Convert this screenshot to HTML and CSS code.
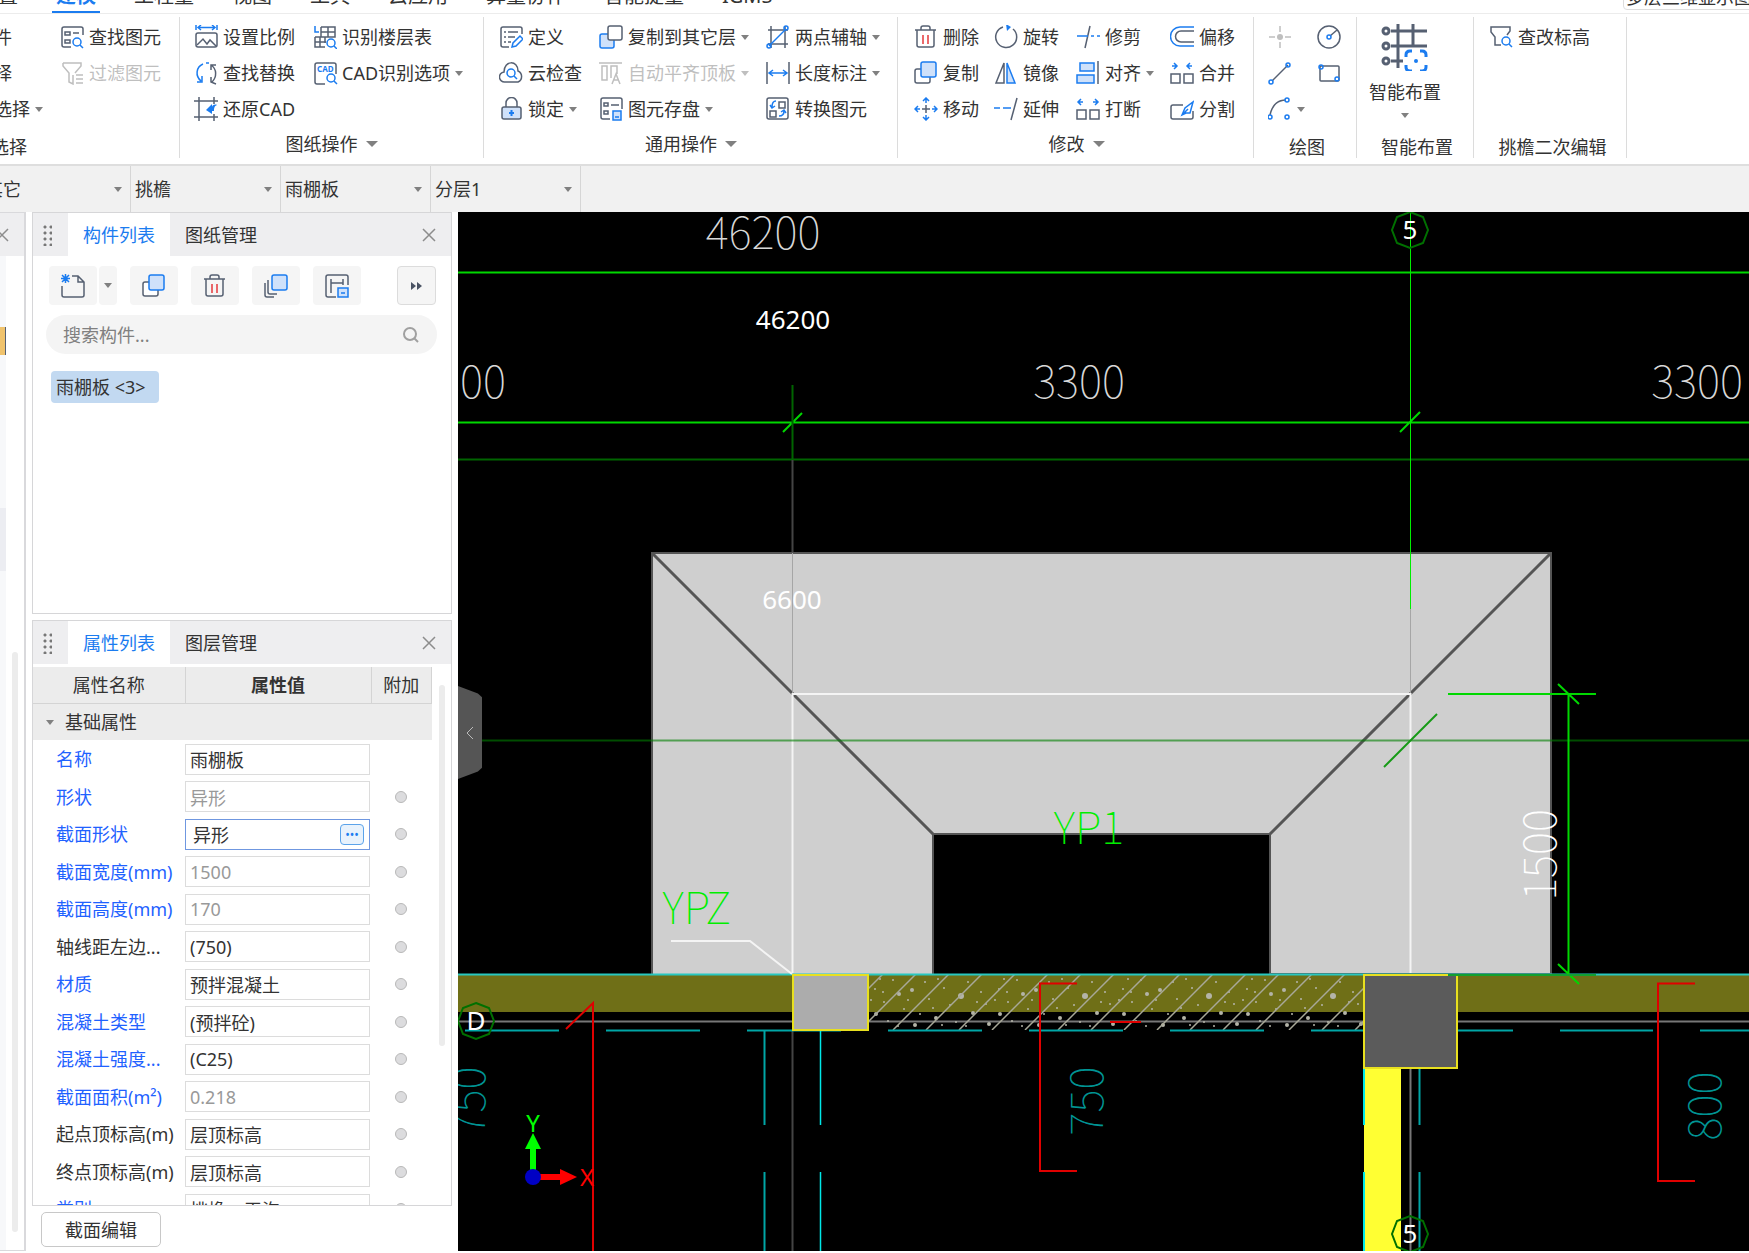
FILE: index.html
```html
<!DOCTYPE html>
<html lang="zh-CN">
<head>
  <meta charset="UTF-8" />
  <meta name="viewport" content="width=device-width, initial-scale=1" />
  <title>雨棚板 - 建模</title>
  <link rel="stylesheet" href="styles.css">
</head>
<body>

<!-- icon sprite -->
<svg class="sprite" aria-hidden="true">
  <symbol id="i-find" viewBox="0 0 24 24">
    <path class="d" d="M11 22H4a2 2 0 0 1-2-2V4a2 2 0 0 1 2-2h17a2 2 0 0 1 2 2v6M5 7h5v3H5zM13 8h6M5 15h5v3H5z"/>
    <circle class="b" cx="17" cy="17" r="4"/><path class="b" d="M20 20l3 3"/>
  </symbol>
  <symbol id="i-filter" viewBox="0 0 24 24">
    <path class="g" d="M3 2h18v3l-6 7v0M3 2v3l6 7v9l4 2V14M16 14h7M16 18h7M16 22h7"/>
  </symbol>
  <symbol id="i-scale" viewBox="0 0 24 24">
    <path class="b" d="M2 0v5M23 0v5M4 2.500h17M7 0L4 2.500L7 5M18 0l3 2.500L18 5"/>
    <rect class="d" x="2" y="8" width="21" height="14" rx="2"/><path class="d" d="M3 20l6-6 4 5 3-4 6 6"/>
  </symbol>
  <symbol id="i-floor" viewBox="0 0 24 24">
    <path class="b" d="M2 1v6h4"/><path class="d" d="M8 2h14v10H9M15 2v10M8 7h14M8 12V2M2 12v10h10M2 12h10v6M2 17h11M7 12v10"/>
    <circle class="b" cx="18" cy="18" r="4"/><path class="b" d="M21 21l3 3"/>
  </symbol>
  <symbol id="i-replace" viewBox="0 0 24 24">
    <path class="b" d="M9 3C2 6 1 15 7 20M8 15v6H3M12 2h3"/><path class="d" d="M17 4c6 4 6 12 1 17M17 9V4h5M17 16v5l5 2"/>
  </symbol>
  <symbol id="i-restore" viewBox="0 0 24 24">
    <path class="d" d="M0 4h24M0 20h24M5 0v24M20 0v7M20 17v7"/>
    <path class="bf" d="M12 13l6-6v3c0-2 3-3 5-2-3 1-3 4-3 6h-2v3z"/>
  </symbol>
  <symbol id="i-define" viewBox="0 0 24 24">
    <path class="d" d="M10 22H4a2 2 0 0 1-2-2V4a2 2 0 0 1 2-2h17a2 2 0 0 1 2 2v5M5 7h2M9 7h10M5 12h2M9 12h7M5 17h2M9 17h3"/>
    <path class="b" d="M13 22l1-4 7-7 3 3-7 7z"/>
  </symbol>
  <symbol id="i-cloud" viewBox="0 0 24 24">
    <path class="d" d="M6 21a5 5 0 0 1-1-10C5 -1 19 -1 19 10a6 6 0 0 1 0 11z"/>
    <circle class="b" cx="12" cy="12" r="4"/><path class="b" d="M15 15l3 3"/>
  </symbol>
  <symbol id="i-lock" viewBox="0 0 24 24">
    <path class="d" d="M7 10V6a5 5 0 0 1 11 0v4"/><rect class="df" x="3" y="10" width="19" height="12" rx="2"/>
    <path class="b2" d="M12.500 13v6M10 16h5"/>
  </symbol>
  <symbol id="i-copyup" viewBox="0 0 24 24">
    <rect class="bl" x="1" y="9" width="14" height="14" rx="2"/><rect class="dw" x="9" y="1" width="14" height="14" rx="2"/>
  </symbol>
  <symbol id="i-align-top" viewBox="0 0 24 24">
    <path class="g" d="M0 2h23M3 5h5v14H3zM12 17V5h6v8M13 23l4-10 4 10M14 19h6"/>
  </symbol>
  <symbol id="i-save" viewBox="0 0 24 24">
    <path class="d" d="M11 22H4a2 2 0 0 1-2-2V3a2 2 0 0 1 2-2h17a2 2 0 0 1 2 2v9M5 6h4v3H5zM12 8h8M5 14h4v3H5z"/>
    <path class="bl" d="M14 14h8v9h-8zM16 20h4"/>
  </symbol>
  <symbol id="i-axis" viewBox="0 0 24 24">
    <path class="d" d="M5 1v22M19 1v22M2 5h20M2 19h20"/><path class="b" d="M3 21L20 4"/>
    <circle class="b" cx="3" cy="21" r="2"/><circle class="b" cx="20" cy="3" r="2"/>
  </symbol>
  <symbol id="i-length" viewBox="0 0 24 24">
    <path class="d" d="M1 1v22M23 1v22"/><path class="b" d="M3 12h18M7 9l-4 3 4 3M17 9l4 3-4 3"/>
  </symbol>
  <symbol id="i-convert" viewBox="0 0 24 24">
    <rect class="d" x="1" y="1" width="21" height="21" rx="2"/><path class="d" d="M13 5h6v6h-6zM4 14h6v6H4z"/>
    <path class="b" d="M10 4C7 4 6 6 6 10M4 8l2 3 3-2M13 19c3 0 5-1 5-5M15 15l3-2 2 3"/>
  </symbol>
  <symbol id="i-trash" viewBox="0 0 24 24">
    <path class="d" d="M1 5h21M7 5V3a2 2 0 0 1 2-2h5a2 2 0 0 1 2 2v2M3 5v15a2 2 0 0 0 2 2h13a2 2 0 0 0 2-2V5"/>
    <path class="r" d="M9 10v9M14 10v9"/>
  </symbol>
  <symbol id="i-rotate" viewBox="0 0 24 24">
    <path class="d" d="M9 2a10.500 10.500 0 1 0 10 2"/><path class="bf" d="M12 -1l5 3-4 4z"/>
  </symbol>
  <symbol id="i-trim" viewBox="0 0 24 24"><path class="d" d="M14 1L9 23"/><path class="b" d="M1 11h11M15 11h3M21 11h3"/></symbol>
  <symbol id="i-offset" viewBox="0 0 24 24"><path class="b" d="M24 2H10a9 9 0 0 0 0 19h14"/><path class="d" d="M24 6H11a5 5 0 0 0 0 11h13"/></symbol>
  <symbol id="i-copy" viewBox="0 0 24 24">
    <rect class="dw" x="1" y="8" width="15" height="14" rx="2"/><rect class="bl" x="7" y="1" width="15" height="15" rx="2"/>
  </symbol>
  <symbol id="i-mirror" viewBox="0 0 24 24"><path class="d" d="M10 2v20H2z"/><path class="bl" d="M13 2v20h8z"/></symbol>
  <symbol id="i-align" viewBox="0 0 24 24">
    <path class="bl" d="M4 2h14v8H4zM1 14h17v8H1z"/><path class="d" d="M22 0v23"/>
  </symbol>
  <symbol id="i-merge" viewBox="0 0 24 24">
    <path class="d" d="M1 13h9v9H1zM14 13h9v9h-9z"/><path class="b" d="M2 5h5M4 2l3 3-3 3M22 5h-5M20 2l-3 3 3 3"/>
  </symbol>
  <symbol id="i-move" viewBox="0 0 24 24">
    <path class="d" d="M12 8v8M8 12h8"/>
    <path class="b" d="M12 1v5M9 4l3-3 3 3M12 23v-5M9 20l3 3 3-3M1 12h5M4 9l-3 3 3 3M23 12h-5M20 9l3 3-3 3"/>
  </symbol>
  <symbol id="i-extend" viewBox="0 0 24 24"><path class="d" d="M23 1l-6 22"/><path class="b" d="M0 11h6M9 11h8"/></symbol>
  <symbol id="i-break" viewBox="0 0 24 24">
    <path class="d" d="M1 13h9v9H1zM14 13h9v9h-9z"/><path class="b" d="M7 5H2M5 2L2 5l3 3M17 5h5M19 2l3 3-3 3"/>
  </symbol>
  <symbol id="i-split" viewBox="0 0 24 24">
    <path class="d" d="M13 8H3a2 2 0 0 0-2 2v10a2 2 0 0 0 2 2h18a2 2 0 0 0 2-2v-6"/><path class="b" d="M12 18l3-7 8-6-3 11h-4zM12 18l6-6"/>
  </symbol>
  <symbol id="i-point" viewBox="0 0 24 24"><path class="g" d="M12 1v6M12 17v6M1 12h6M17 12h6"/><circle class="gf" cx="12" cy="12" r="3"/></symbol>
  <symbol id="i-circle" viewBox="0 0 24 24"><circle class="d" cx="12" cy="12" r="11"/><path class="d" d="M13 11l7-6"/><circle class="b" cx="12" cy="12" r="2"/></symbol>
  <symbol id="i-line" viewBox="0 0 24 24"><path class="d" d="M4 20L20 4"/><circle class="b" cx="3" cy="21" r="2"/><circle class="b" cx="20" cy="4" r="2"/></symbol>
  <symbol id="i-rect" viewBox="0 0 24 24"><rect class="d" x="3" y="5" width="19" height="15" rx="1"/><circle class="b" cx="4" cy="6" r="2"/><circle class="b" cx="20" cy="18" r="2"/></symbol>
  <symbol id="i-arc" viewBox="0 0 24 24"><path class="d" d="M2 18C4 9 9 3 18 3"/><circle class="b" cx="2" cy="20" r="2"/><circle class="b" cx="19" cy="3" r="2"/><circle class="b" cx="19" cy="20" r="2"/></symbol>
  <symbol id="i-smart" viewBox="0 0 48 48">
    <path class="d3" d="M10 8h36M10 23h36M10 38h12M17 1v44M32 1v21"/>
    <circle class="d3" cx="5" cy="8" r="3"/><circle class="d3" cx="5" cy="23" r="3"/><circle class="d3" cx="5" cy="38" r="3"/>
    <path class="b3" d="M25 34v-2q0-4 4-4h2M39 28h2q4 0 4 4v2M45 42v2q0 4-4 4h-2M31 48h-2q-4 0-4-4v-2"/>
    <circle class="bf" cx="35" cy="38" r="2"/>
  </symbol>
  <symbol id="i-elev" viewBox="0 0 24 24">
    <path class="d" d="M12 20H6V12L2 7V2h19v4l-3 4"/><circle class="b" cx="17" cy="16" r="4"/><path class="b" d="M20 19l3 3"/>
  </symbol>
  <symbol id="i-new" viewBox="0 0 24 24">
    <path class="d" d="M11 2h6l6 6v13a2 2 0 0 1-2 2H3a2 2 0 0 1-2-2v-9M17 2v6h6"/>
    <path class="b" d="M1 1l7 7M8 1L1 8M4.500 0v9M0 4.500h9"/>
  </symbol>
  <symbol id="i-layers" viewBox="0 0 24 24">
    <path class="d" d="M1 9v12a2 2 0 0 0 2 2h7M4 6v12a2 2 0 0 0 2 2h7"/><rect class="bl" x="8" y="1" width="15" height="15" rx="2"/>
  </symbol>
  <symbol id="i-store" viewBox="0 0 24 24">
    <path class="d" d="M11 23H3a2 2 0 0 1-2-2V3a2 2 0 0 1 2-2h18a2 2 0 0 1 2 2v8M6 5v14M18 5v6M6 9h12"/>
    <path class="bl" d="M13 14h10v9H13zM16 19h4"/>
  </symbol>
  <symbol id="i-close" viewBox="0 0 14 14"><path class="x" d="M1 1l12 12M13 1L1 13"/></symbol>
</svg>

<nav class="menu">
  <a href="#">程设置</a>
  <a href="#" class="active">建模</a>
  <a href="#">工程量</a>
  <a href="#">视图</a>
  <a href="#">工具</a>
  <a href="#">云应用</a>
  <a href="#">算量协作</a>
  <a href="#">智能提量</a>
  <a href="#">IGMS</a>
  <button class="floor-tip">多层三维显示图元</button>
</nav>

<header class="ribbon">
  <section class="group g-select">
    <div class="tools">
      <button class="tool bare">件</button>
      <button class="tool"><svg><use href="#i-find"/></svg>查找图元</button>
      <button class="tool bare">择</button>
      <button class="tool" disabled><svg><use href="#i-filter"/></svg>过滤图元</button>
      <button class="tool bare more">选择</button>
    </div>
    <h2 class="plain">选择</h2>
  </section>

  <section class="group g-drawing">
    <div class="tools">
      <button class="tool"><svg><use href="#i-scale"/></svg>设置比例</button>
      <button class="tool"><svg><use href="#i-floor"/></svg>识别楼层表</button>
      <button class="tool"><svg><use href="#i-replace"/></svg>查找替换</button>
      <button class="tool more">
        <svg viewBox="0 0 24 24">
          <path class="d" d="M12 23H4a2 2 0 0 1-2-2V4a2 2 0 0 1 2-2h17a2 2 0 0 1 2 2v9"/>
          <text class="tiny" x="4" y="11">CAD</text>
          <circle class="b" cx="18" cy="17" r="4"/><path class="b" d="M21 20l3 3"/>
        </svg>CAD识别选项
      </button>
      <button class="tool"><svg><use href="#i-restore"/></svg>还原CAD</button>
    </div>
    <h2>图纸操作</h2>
  </section>

  <section class="group g-common">
    <div class="tools">
      <button class="tool"><svg><use href="#i-define"/></svg>定义</button>
      <button class="tool more"><svg><use href="#i-copyup"/></svg>复制到其它层</button>
      <button class="tool more"><svg><use href="#i-axis"/></svg>两点辅轴</button>
      <button class="tool"><svg><use href="#i-cloud"/></svg>云检查</button>
      <button class="tool more" disabled><svg><use href="#i-align-top"/></svg>自动平齐顶板</button>
      <button class="tool more"><svg><use href="#i-length"/></svg>长度标注</button>
      <button class="tool more"><svg><use href="#i-lock"/></svg>锁定</button>
      <button class="tool more"><svg><use href="#i-save"/></svg>图元存盘</button>
      <button class="tool"><svg><use href="#i-convert"/></svg>转换图元</button>
    </div>
    <h2>通用操作</h2>
  </section>

  <section class="group g-modify">
    <div class="tools">
      <button class="tool"><svg><use href="#i-trash"/></svg>删除</button>
      <button class="tool"><svg><use href="#i-rotate"/></svg>旋转</button>
      <button class="tool"><svg><use href="#i-trim"/></svg>修剪</button>
      <button class="tool"><svg><use href="#i-offset"/></svg>偏移</button>
      <button class="tool"><svg><use href="#i-copy"/></svg>复制</button>
      <button class="tool"><svg><use href="#i-mirror"/></svg>镜像</button>
      <button class="tool more"><svg><use href="#i-align"/></svg>对齐</button>
      <button class="tool"><svg><use href="#i-merge"/></svg>合并</button>
      <button class="tool"><svg><use href="#i-move"/></svg>移动</button>
      <button class="tool"><svg><use href="#i-extend"/></svg>延伸</button>
      <button class="tool"><svg><use href="#i-break"/></svg>打断</button>
      <button class="tool"><svg><use href="#i-split"/></svg>分割</button>
    </div>
    <h2>修改</h2>
  </section>

  <section class="group g-draw">
    <div class="tools">
      <button class="tool" aria-label="点" disabled><svg><use href="#i-point"/></svg></button>
      <button class="tool" aria-label="圆"><svg><use href="#i-circle"/></svg></button>
      <button class="tool" aria-label="直线"><svg><use href="#i-line"/></svg></button>
      <button class="tool" aria-label="矩形"><svg><use href="#i-rect"/></svg></button>
      <button class="tool more" aria-label="弧"><svg><use href="#i-arc"/></svg></button>
    </div>
    <h2 class="plain">绘图</h2>
  </section>

  <section class="group g-smart">
    <button class="big-tool"><svg><use href="#i-smart"/></svg>智能布置</button>
    <h2 class="plain">智能布置</h2>
  </section>

  <section class="group g-eave">
    <div class="tools">
      <button class="tool"><svg><use href="#i-elev"/></svg>查改标高</button>
    </div>
    <h2 class="plain">挑檐二次编辑</h2>
  </section>
</header>

<div class="combos">
  <label class="combo"><select aria-label="构件大类"><option>其它</option></select></label>
  <label class="combo"><select aria-label="构件类型"><option>挑檐</option></select></label>
  <label class="combo"><select aria-label="构件"><option>雨棚板</option></select></label>
  <label class="combo"><select aria-label="分层"><option>分层1</option></select></label>
</div>

<main class="workspace">
  <aside class="nav-strip">
    <div class="panel-head"><button class="close" aria-label="关闭"><svg><use href="#i-close"/></svg></button></div>
    <div class="strip-body">
      <div class="strip-list">
        <span class="strip-mark"></span>
        <span class="strip-sel"></span>
      </div>
      <div class="strip-scroll"></div>
    </div>
  </aside>

  <div class="docks">
    <section class="panel">
      <div class="panel-head">
        <span class="grip"></span>
        <button class="tab active">构件列表</button>
        <button class="tab">图纸管理</button>
        <button class="close" aria-label="关闭"><svg><use href="#i-close"/></svg></button>
      </div>
      <div class="panel-tools">
        <div class="split-btn">
          <button aria-label="新建"><svg><use href="#i-new"/></svg></button>
          <button class="drop" aria-label="新建选项"></button>
        </div>
        <button aria-label="复制"><svg><use href="#i-copy"/></svg></button>
        <button aria-label="删除"><svg><use href="#i-trash"/></svg></button>
        <button aria-label="层间复制"><svg><use href="#i-layers"/></svg></button>
        <button aria-label="存档"><svg><use href="#i-store"/></svg></button>
        <button class="expand" aria-label="更多"><svg viewBox="0 0 12 8"><path d="M0 0l5 4-5 4zM6 0l5 4-5 4z"/></svg></button>
      </div>
      <label class="search">
        <input type="text" placeholder="搜索构件..." aria-label="搜索构件">
        <svg viewBox="0 0 16 16"><circle cx="7" cy="7" r="6"/><path d="M11 11l4 4"/></svg>
      </label>
      <ul class="items"><li>雨棚板 &lt;3&gt;</li></ul>
    </section>

    <section class="panel props">
      <div class="panel-head">
        <span class="grip"></span>
        <button class="tab active">属性列表</button>
        <button class="tab">图层管理</button>
        <button class="close" aria-label="关闭"><svg><use href="#i-close"/></svg></button>
      </div>
      <div class="props-body">
        <table>
          <thead>
            <tr><th>属性名称</th><th class="strong">属性值</th><th>附加</th></tr>
            <tr class="section"><td colspan="3">基础属性</td></tr>
          </thead>
          <tbody>
            <tr><td class="key"><label for="p1">名称</label></td><td><input id="p1" type="text" value="雨棚板"></td><td></td></tr>
            <tr><td class="key"><label for="p2">形状</label></td><td><input id="p2" type="text" value="异形" disabled></td><td><input type="checkbox" aria-label="附加形状"></td></tr>
            <tr><td class="key"><label for="p3">截面形状</label></td><td><div class="picker"><input id="p3" type="text" value="异形"><button aria-label="选择截面">•••</button></div></td><td><input type="checkbox" aria-label="附加截面形状"></td></tr>
            <tr><td class="key"><label for="p4">截面宽度(mm)</label></td><td><input id="p4" type="text" value="1500" disabled></td><td><input type="checkbox" aria-label="附加截面宽度"></td></tr>
            <tr><td class="key"><label for="p5">截面高度(mm)</label></td><td><input id="p5" type="text" value="170" disabled></td><td><input type="checkbox" aria-label="附加截面高度"></td></tr>
            <tr><td><label for="p6">轴线距左边...</label></td><td><input id="p6" type="text" value="(750)"></td><td><input type="checkbox" aria-label="附加轴线距左边"></td></tr>
            <tr><td class="key"><label for="p7">材质</label></td><td><input id="p7" type="text" value="预拌混凝土"></td><td><input type="checkbox" aria-label="附加材质"></td></tr>
            <tr><td class="key"><label for="p8">混凝土类型</label></td><td><input id="p8" type="text" value="(预拌砼)"></td><td><input type="checkbox" aria-label="附加混凝土类型"></td></tr>
            <tr><td class="key"><label for="p9">混凝土强度...</label></td><td><input id="p9" type="text" value="(C25)"></td><td><input type="checkbox" aria-label="附加混凝土强度"></td></tr>
            <tr><td class="key"><label for="p10">截面面积(m²)</label></td><td><input id="p10" type="text" value="0.218" disabled></td><td><input type="checkbox" aria-label="附加截面面积"></td></tr>
            <tr><td><label for="p11">起点顶标高(m)</label></td><td><input id="p11" type="text" value="层顶标高"></td><td><input type="checkbox" aria-label="附加起点顶标高"></td></tr>
            <tr><td><label for="p12">终点顶标高(m)</label></td><td><input id="p12" type="text" value="层顶标高"></td><td><input type="checkbox" aria-label="附加终点顶标高"></td></tr>
            <tr><td class="key"><label for="p13">类别</label></td><td><input id="p13" type="text" value="挑檐、天沟"></td><td><input type="checkbox" aria-label="附加类别"></td></tr>
          </tbody>
        </table>
        <div class="scroll-thumb"></div>
      </div>
    </section>

    <div class="dock-foot"><button class="edit-btn">截面编辑</button></div>
  </div>

  <div class="canvas">
    <svg class="cad" viewBox="458 212 1291 1039" preserveAspectRatio="xMinYMin slice">
      <defs>
        <pattern id="hatch" patternUnits="userSpaceOnUse" x="883" y="974" width="33" height="57">
          <path d="M33 0L-23 56M66 0L10 56" stroke="#a8a898" stroke-width="1.5"/>
        </pattern>
        <pattern id="speckle" patternUnits="userSpaceOnUse" x="868" y="974" width="124" height="57">
          <g fill="#b4b4a8">
            <circle cx="7" cy="15" r="1"/><circle cx="16" cy="28" r="1"/><circle cx="25" cy="6" r="1"/><circle cx="31" cy="20" r="2"/>
            <circle cx="8" cy="40" r="2"/><circle cx="20" cy="47" r="1"/><circle cx="36" cy="35" r="1"/><circle cx="44" cy="16" r="2"/>
            <circle cx="52" cy="40" r="1"/><circle cx="57" cy="8" r="1"/><circle cx="61" cy="25" r="1"/><circle cx="47" cy="51" r="2"/>
            <circle cx="68" cy="44" r="2"/><circle cx="76" cy="14" r="1"/><circle cx="82" cy="31" r="1"/><circle cx="88" cy="48" r="1"/>
            <circle cx="93" cy="22" r="3"/><circle cx="100" cy="8" r="1"/><circle cx="105" cy="39" r="2"/><circle cx="113" cy="18" r="1"/>
            <circle cx="118" cy="30" r="1"/><circle cx="121" cy="50" r="2"/><circle cx="12" cy="5" r="1"/><circle cx="70" cy="5" r="1"/>
            <circle cx="3" cy="26" r="1"/><circle cx="40" cy="26" r="1"/><circle cx="98" cy="52" r="1"/><circle cx="30" cy="52" r="1"/>
            <circle cx="15" cy="18" r="1"/><circle cx="65" cy="34" r="1"/><circle cx="74" cy="51" r="1"/><circle cx="109" cy="28" r="1"/>
          </g>
        </pattern>
      </defs>

      <!-- axis and dimension lines -->
      <path class="green" d="M458 272.500H1749M458 422.500H1749M783 432l19-19M1400 432l20-20"/>
      <path class="green-dim" d="M458 459.500H1749M792.500 385V459"/>
      <path class="grey" d="M792.500 460V553M792.500 1030V1251"/>

      <!-- canopy slab -->
      <path class="slab" d="M652 974V553H1551V974H1270V834H933V974"/>
      <path class="slab-edge" d="M652 553L933 834M1551 553L1270 834"/>
      <path d="M792.500 553V694M1410.500 609V694" stroke="#a6a6a6"/>
      <path d="M792.500 973V694H1410.500V973" stroke="#f4f4f4" stroke-width="2" fill="none"/>
      <path d="M1410.500 212V609" stroke="#0e0"/>
      <path class="grid-line" d="M458 740.500H1749"/>
      <path d="M1384 767l53-53" stroke="#169a16" stroke-width="2"/>

      <!-- walls -->
      <path class="wall" d="M458 974H792V1012H458zM868 974H1364V1012H868zM1457 974H1749V1012H1457z"/>
      <path d="M458 1021.500H1749" stroke="#777" stroke-width="2"/>
      <rect x="868" y="974" width="496" height="56" fill="url(#speckle)"/>
      <rect x="868" y="974" width="496" height="56" fill="url(#hatch)"/>
      <path d="M458 974.500H1749" stroke="#28c8c0" stroke-width="2"/>
      <path class="teal" stroke-dasharray="94 47" d="M465 1030.500H1364"/>
      <path class="teal" stroke-dasharray="93 47" d="M1420 1030.500H1749"/>
      <path class="teal" d="M764.500 1031V1125M764.500 1172V1251M1419.500 1068V1125M1419.500 1172V1251"/>
      <path d="M820.500 1031V1125M820.500 1172V1251" stroke="#00e8e8" stroke-width="1.5"/>

      <!-- beam and columns -->
      <path d="M1410.500 1068V1251" stroke="#777" stroke-width="2"/>
      <rect x="1364" y="1068" width="37" height="183" fill="#ffff33"/>
      <path d="M1364 1068V1125M1364 1172V1251" stroke="#00e8e8" stroke-width="2"/>
      <rect x="793" y="975" width="75" height="55" fill="#acacac" stroke="#e8e020" stroke-width="2"/>
      <rect x="1364" y="975" width="93" height="93" fill="#5b5b5b" stroke="#e8e020" stroke-width="2"/>

      <!-- 1500 dimension -->
      <path class="green" d="M1448 694H1596M1568.500 694V974M1558 684l21 20M1558 964l21 20"/>
      <path d="M1448 975H1596" stroke="#12a030" stroke-width="2"/>

      <!-- leaders -->
      <path d="M671 941H750L792 974" stroke="#f4f4f4" stroke-width="2" fill="none"/>
      <path class="red" d="M566 1029L593 1003V1251M1077 983.500H1040V1171H1077M1695 983.500H1658V1181H1695M1110 1022H1141"/>

      <!-- grid bubbles -->
      <path class="bubble" d="M1410 212l13 5 5 13-5 13-13 5-13-5-5-13 5-13z"/>
      <path class="bubble" d="M1410 1216l13 5 5 13-5 13-13 5-13-5-5-13 5-13z"/>
      <path class="bubble" d="M476 1003l13 5 5 13-5 13-13 5-13-5-5-13 5-13z"/>

      <!-- annotations -->
      <g class="mark">
        <text x="1410" y="239">5</text><text x="1410" y="1243">5</text><text x="476" y="1030">D</text>
        <text x="793" y="329">46200</text><text x="792" y="609">6600</text>
      </g>
      <g class="dim">
        <text x="763" y="249">46200</text>
        <text x="460" y="398">3300</text>
        <text x="1079" y="398">3300</text>
        <text x="1697" y="398">3300</text>
      </g>
      <g class="dim light"><text transform="translate(1556 855) rotate(-90)">1500</text></g>
      <g class="dim name"><text x="1089" y="844">YP1</text><text x="697" y="924">YPZ</text></g>
      <g class="dim tealtext">
        <text transform="translate(485 1101) rotate(-90)">750</text>
        <text transform="translate(1103 1101) rotate(-90)">750</text>
        <text transform="translate(1721 1106) rotate(-90)">800</text>
      </g>

      <!-- coordinate axes -->
      <path d="M530 1170V1149H525L533 1133L541 1149H536V1170z" fill="#0f0"/>
      <path d="M540 1174H560V1169L577 1177L560 1185V1180H540z" fill="#f00"/>
      <circle cx="533" cy="1177" r="8" fill="#0000c4"/>
      <text class="axis" x="533" y="1132" fill="#0f0">Y</text>
      <text class="axis" x="587" y="1186" fill="#f00">X</text>
    </svg>
    <button class="collapse" aria-label="收起"><svg viewBox="0 0 8 14"><path d="M7 1L1 7l6 6"/></svg></button>
  </div>
</main>

</body>
</html>
```
FILE: styles.css
```css
* {
  box-sizing: border-box;
}
body {
  margin: 0;
  height: 100vh;
  display: flex;
  flex-direction: column;
  overflow: hidden;
  background: #fff;
  color: #333;
  font-family: "Noto Sans", "Noto Sans CJK SC", sans-serif;
  font-size: 18px;
  line-height: 24px;
}
button, input, select {
  font: inherit;
  color: inherit;
  margin: 0;
  padding: 0;
  border: 0;
  background: none;
}
button {
  cursor: pointer;
}

/* icons */
.sprite {
  position: absolute;
  width: 0;
  height: 0;
}
.d, .b, .g, .r, .x, .b2, .d3, .b3 {
  fill: none;
  stroke-width: 1.5px;
}
.d, .d3 { stroke: #566072; }
.b, .b2, .b3 { stroke: #1b7cf0; }
.b2 { stroke-width: 2px; }
.d3, .b3 { stroke-width: 3px; }
.g { stroke: #bfbfbf; }
.gf { fill: #bfbfbf; }
.r { stroke: #e5383b; }
.x { stroke: #8c8c8c; }
.bf { fill: #1b7cf0; }
.df { fill: #cfe1fa; stroke: #566072; stroke-width: 1.5px; }
.dw { fill: #fff; stroke: #566072; stroke-width: 1.5px; }
.bl { fill: #cfe1fa; stroke: #1b7cf0; stroke-width: 1.5px; }
.tiny {
  font-size: 8px;
  font-weight: bold;
  fill: #1b7cf0;
}

/* menu tabs */
.menu {
  display: flex;
  align-items: flex-end;
  height: 14px;
  flex: none;
  overflow: hidden;
  border-bottom: 1px solid #ececec;
  margin-left: -61px;
}
.menu a {
  position: relative;
  padding: 0 19px 7px;
  font-size: 20px;
  line-height: 20px;
  color: #333;
  text-decoration: none;
  white-space: nowrap;
}
.menu a.active {
  color: #1b7cf0;
  font-weight: bold;
}
.menu a.active::after {
  content: "";
  position: absolute;
  left: 15px;
  right: 15px;
  bottom: 0;
  height: 2px;
  background: #1b7cf0;
}
.floor-tip {
  margin-left: auto;
  margin-right: -24px;
  margin-bottom: 3px;
  padding: 0 2px 2px;
  border: 1px solid #ddd;
  border-radius: 4px;
  line-height: 20px;
  white-space: nowrap;
}

/* ribbon */
.ribbon {
  display: flex;
  flex: none;
  padding: 3px 0 6px;
  border-bottom: 2px solid #dedede;
}
.group {
  display: flex;
  flex-direction: column;
  padding: 2px 0 0 14px;
  border-right: 1px solid #dcdcdc;
}
.tools {
  display: grid;
  grid-auto-rows: 36px;
  height: 108px;
}
.tool {
  display: flex;
  align-items: center;
  gap: 5px;
  white-space: nowrap;
}
.tool svg {
  width: 24px;
  height: 24px;
  overflow: visible;
}
.tool:disabled {
  color: #bfbfbf;
}
.more::after, .group h2::after, .combo::after, .drop::after, .big-tool::after {
  content: "";
  border: 4px solid transparent;
  border-top: 5px solid #808080;
  border-bottom: 0;
}
.more:disabled::after {
  border-top-color: #bfbfbf;
}
.group h2 {
  display: flex;
  align-items: center;
  justify-content: center;
  gap: 8px;
  margin: 3px 0 0 -14px;
  font-size: 18px;
  font-weight: normal;
  line-height: 28px;
}
.group h2::after {
  border-width: 6px 6px 0;
}
.group h2.plain {
  margin-top: 9px;
  padding-left: 4px;
  line-height: 22px;
}
.group h2.plain::after {
  display: none;
}
.g-select { width: 180px; padding-left: 0; }
.g-select .tools { grid-template-columns: 66px auto; margin-left: -6px; }
.g-select h2 { margin-left: -13px; justify-content: flex-start; }
.g-drawing { width: 304px; }
.g-drawing .tools { grid-template-columns: 119px auto; }
.g-common { width: 414px; padding-left: 15px; }
.g-common .tools { grid-template-columns: 100px 167px auto; }
.g-modify { width: 356px; padding-left: 16px; }
.g-modify .tools { grid-template-columns: 80px 82px 94px auto; }
.g-draw { width: 103px; }
.g-draw .tools { grid-template-columns: 49px auto; }
.g-smart { width: 117px; }
.g-eave { width: 153px; padding-left: 15px; }
.big-tool {
  display: flex;
  flex-direction: column;
  align-items: center;
  gap: 9px;
  height: 108px;
  width: 72px;
  padding-top: 4px;
  margin-left: -2px;
  white-space: nowrap;
}
.big-tool svg {
  width: 48px;
  height: 48px;
}

/* component selectors */
.combos {
  display: flex;
  flex: none;
  height: 46px;
  margin-left: -19px;
  background: #f1f1f1;
}
.combo {
  display: flex;
  align-items: center;
  width: 150px;
  padding: 0 8px 0 4px;
  border-right: 1px solid #d6d6d6;
}
.combo select {
  flex: 1;
  appearance: none;
  outline: none;
}

/* workspace */
.workspace {
  flex: 1;
  min-height: 0;
  display: flex;
  padding-bottom: 2px;
}
.nav-strip {
  width: 26px;
  display: flex;
  flex-direction: column;
  border: solid #d9d9dc;
  border-width: 1px 2px 1px 0;
}
.nav-strip .close {
  margin: 0 0 0 -5px;
}
.strip-body {
  flex: 1;
  display: flex;
  justify-content: space-between;
}
.strip-list {
  width: 6px;
  background: #f7f8fa;
}
.strip-mark {
  display: block;
  height: 28px;
  margin-top: 71px;
  background: #f0c36d;
  border-right: 1px solid #566072;
}
.strip-sel {
  display: block;
  height: 63px;
  margin-top: 153px;
  background: #ecedf2;
}
.strip-scroll {
  width: 6px;
  margin: 396px 6px 18px 0;
  border-radius: 3px;
  background: #ececec;
}
.docks {
  width: 420px;
  margin: 0 6px;
  display: grid;
  grid-template-rows: 402px 1fr 39px;
  row-gap: 6px;
  min-height: 0;
}
.panel {
  min-height: 0;
  overflow: hidden;
  border: 1px solid #d6d6d8;
}
.panel-head {
  display: flex;
  align-items: center;
  height: 43px;
  background: #eeeef0;
}
.grip {
  width: 10px;
  height: 22px;
  margin: 0 16px 0 9px;
  background: radial-gradient(circle, #777 1px, transparent 2px) 0 0 / 6px 6px;
}
.tab {
  height: 43px;
  padding: 0 15px;
}
.tab.active {
  background: #fff;
  color: #1b7cf0;
}
.close {
  margin: 0 15px 0 auto;
  height: 14px;
}
.close svg {
  display: block;
  width: 14px;
  height: 14px;
}
.panel-tools {
  display: flex;
  gap: 13px;
  padding: 10px 15px 10px 16px;
}
.panel-tools button {
  display: flex;
  align-items: center;
  justify-content: center;
  width: 48px;
  height: 39px;
  border-radius: 4px;
  background: #f5f5f5;
}
.panel-tools svg {
  width: 24px;
  height: 24px;
}
.split-btn {
  display: flex;
  gap: 2px;
}
.panel-tools .drop {
  width: 18px;
}
.panel-tools .expand {
  width: 39px;
  margin-left: auto;
  border: 1px solid #dcdcdc;
}
.panel-tools .expand svg {
  width: 12px;
  height: 8px;
  fill: #4a5364;
}
.search {
  display: flex;
  align-items: center;
  height: 39px;
  margin: 0 14px 0 13px;
  padding: 0 18px 0 17px;
  border-radius: 20px;
  background: #f4f4f4;
}
.search input {
  flex: 1;
  min-width: 0;
  outline: none;
}
.search input::placeholder {
  color: #808080;
}
.search svg {
  width: 16px;
  height: 16px;
  fill: none;
  stroke: #a0a0a0;
  stroke-width: 2px;
}
.items {
  list-style: none;
  margin: 17px 18px;
  padding: 0;
}
.items li {
  display: inline-block;
  padding: 4px 13px 4px 5px;
  border-radius: 4px;
  background: #c2d9f1;
  white-space: pre;
}

/* properties */
.props-body {
  display: flex;
  align-items: flex-start;
  padding-top: 3px;
}
.props table {
  width: 399px;
  table-layout: fixed;
  border-collapse: collapse;
}
.props th {
  height: 36px;
  padding: 0;
  font-weight: normal;
  background: #ececec;
  border: solid #d4d4d4;
  border-width: 0 1px 1px 0;
}
.props th:nth-child(1) { width: 152px; }
.props th:nth-child(2) { width: 186px; }
.props th.strong {
  font-weight: bold;
}
.props td {
  height: 38px;
  padding: 0;
}
.props tr:nth-child(even) td {
  height: 37px;
}
.props .section td {
  height: 35px;
  padding-left: 13px;
  background: #ececec;
}
.section td::before {
  content: "";
  display: inline-block;
  margin-right: 11px;
  vertical-align: 4px;
  border: 4px solid transparent;
  border-top: 5px solid #808080;
  border-bottom: 0;
}
.props tbody td:first-child {
  padding-left: 23px;
  white-space: nowrap;
}
.props tbody td:last-child {
  text-align: center;
  line-height: 0;
}
.key {
  color: #1f62ff;
}
.props input[type="text"] {
  display: block;
  width: 185px;
  height: 31px;
  padding: 0 4px;
  border: 1px solid #dcdcdc;
  outline: none;
}
.props input:disabled {
  color: #999;
}
.props input[type="checkbox"] {
  appearance: none;
  width: 12px;
  height: 12px;
  border: 1px solid #b8b8b8;
  border-radius: 50%;
  background: #dcdcde;
}
.picker {
  display: flex;
  align-items: center;
  width: 185px;
  height: 31px;
  padding: 0 5px 0 3px;
  border: 1px solid #6f97e0;
}
.props .picker input {
  flex: 1;
  min-width: 0;
  height: 29px;
  border: 0;
}
.picker button {
  width: 24px;
  height: 21px;
  border: 1px solid #5ba3ea;
  border-radius: 4px;
  background: #e8f2fc;
  color: #1b7cf0;
  font-size: 12px;
  line-height: 19px;
}
.scroll-thumb {
  width: 6px;
  height: 361px;
  margin: 18px 0 0 7px;
  border-radius: 3px;
  background: #ececec;
}
.dock-foot {
  padding-left: 9px;
}
.edit-btn {
  width: 120px;
  height: 35px;
  border: 1px solid #c8c8c8;
  border-radius: 5px;
}

/* drawing area */
.canvas {
  position: relative;
  flex: 1;
  min-width: 0;
  background: #000;
  overflow: hidden;
}
.cad {
  display: block;
  width: 100%;
  height: 100%;
}
.green { stroke: #00d800; stroke-width: 2px; fill: none; }
.green-dim { stroke: #006400; stroke-width: 2px; }
.grey { stroke: #444; stroke-width: 2px; }
.grid-line { stroke: #008000; stroke-width: 2px; opacity: .6; }
.slab { fill: #cfcfcf; stroke: #555; stroke-width: 2px; }
.slab-edge { stroke: #555; stroke-width: 3px; }
.wall { fill: #6f6f17; }
.teal { stroke: #00a6a6; stroke-width: 2px; fill: none; }
.red { stroke: #e00000; stroke-width: 2px; fill: none; }
.bubble { stroke: #007000; stroke-width: 2px; fill: none; }
.cad text {
  text-anchor: middle;
}
.mark {
  fill: #fff;
  font-size: 26px;
}
.dim {
  fill: #d8d8d8;
  font-family: "Noto Sans CJK SC", "Roboto", sans-serif;
  font-weight: 100;
  font-size: 44px;
}
.light { fill: #fff; }
.name { fill: #00ee00; }
.tealtext { fill: #009494; }
.axis {
  font-size: 24px;
}
.collapse {
  position: absolute;
  left: 0;
  top: 474px;
  width: 24px;
  height: 93px;
  background: #555;
  clip-path: polygon(0 0, 83% 8%, 100% 12%, 100% 88%, 83% 92%, 0 100%);
}
.collapse svg {
  width: 8px;
  height: 14px;
  fill: none;
  stroke: #bbb;
}
```
